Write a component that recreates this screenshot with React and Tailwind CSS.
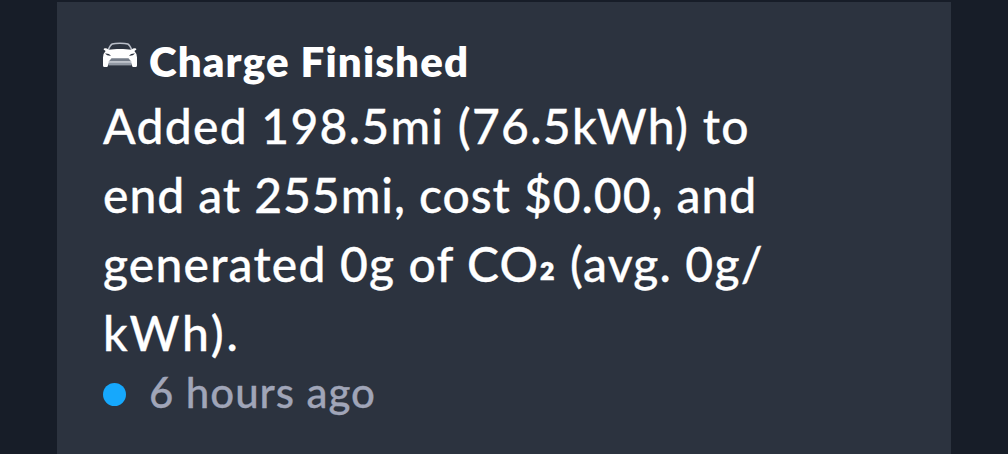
function CarIcon() {
  return (
    <svg className="block h-[26px] w-[34px] shrink-0" viewBox="0 0 34 26" aria-hidden="true">
      <path d="M5 8.5C6.2 5.6 7.6 2.8 9.2 2.1C12.5 1 21.5 1 24.8 2.1C26.4 2.8 27.8 5.6 29 8.5" fill="none" stroke="#b9bec8" strokeWidth="1.6" />
      <path d="M5.6 7.8C12 6.6 22 6.6 28.4 7.8L30 6.4Q33.4 5.6 33.4 7.4L31.4 9Q34 11.5 34 15.5V23.5Q34 25 32.6 25H30.4Q29.2 25 29 23.5L28.2 21.5H5.8L5 23.5Q4.8 25 3.6 25H1.4Q0 25 0 23.5V15.5Q0 11.5 2.6 9L.6 7.4Q.6 5.6 4 6.4Z" fill="#fff" />
      <path d="M2 11.6Q6 11.2 8 13.8Q4.2 14.2 2 11.6ZM32 11.6Q28 11.2 26 13.8Q29.8 14.2 32 11.6Z" fill="#2c333f" />
      <path d="M8.5 16.2H25.5L28 19.2H6Z" fill="#747c88" />
      <path d="M5.6 19.2H28.4V21.5H5.6Z" fill="#b7bcc5" />
      <path d="M5.6 21H28.4V23.4H5.6Z" fill="#9299a4" />
    </svg>
  );
}

export default function App() {
  return (
    <main className="h-[454px] w-full overflow-hidden bg-[#171d28] px-[57px] pt-0.5 font-['Lato','Noto_Sans',sans-serif]">
      <article className="h-full w-[894px] bg-[#2c333f] pl-[46px] pt-[29px] text-white">
        <header className="flex h-[60px] gap-[12px]">
          <div className="pt-[11px]"><CarIcon /></div>
          <h1 className="whitespace-nowrap text-[42px] font-extrabold leading-[60px] tracking-[1.13px]">Charge Finished</h1>
        </header>
        <p className="whitespace-nowrap text-[48px] font-medium leading-[69px] [-webkit-text-stroke:0.3px_currentColor]">
          <span className="block tracking-[1.28px]">Added 198.5mi (76.5kWh) to</span>
          <span className="block tracking-[0.96px]">end at 255mi, cost $0.00, and</span>
          <span className="block tracking-[1.2px]">generated 0g of CO<span className="inline-block -translate-y-[7px] font-bold leading-none">₂</span> (avg. 0g/</span>
          <span className="block tracking-[2.8px]">kWh).</span>
        </p>
        <footer className="flex h-[50px] items-center gap-[23px]">
          <span className="mt-1 size-[23px] rounded-full bg-[#16a8fc]" />
          <time className="whitespace-nowrap text-[42px] font-medium leading-[48px] tracking-[0.95px] text-[#a0a5b8] [-webkit-text-stroke:0.3px_currentColor]">6 hours ago</time>
        </footer>
      </article>
    </main>
  );
}
